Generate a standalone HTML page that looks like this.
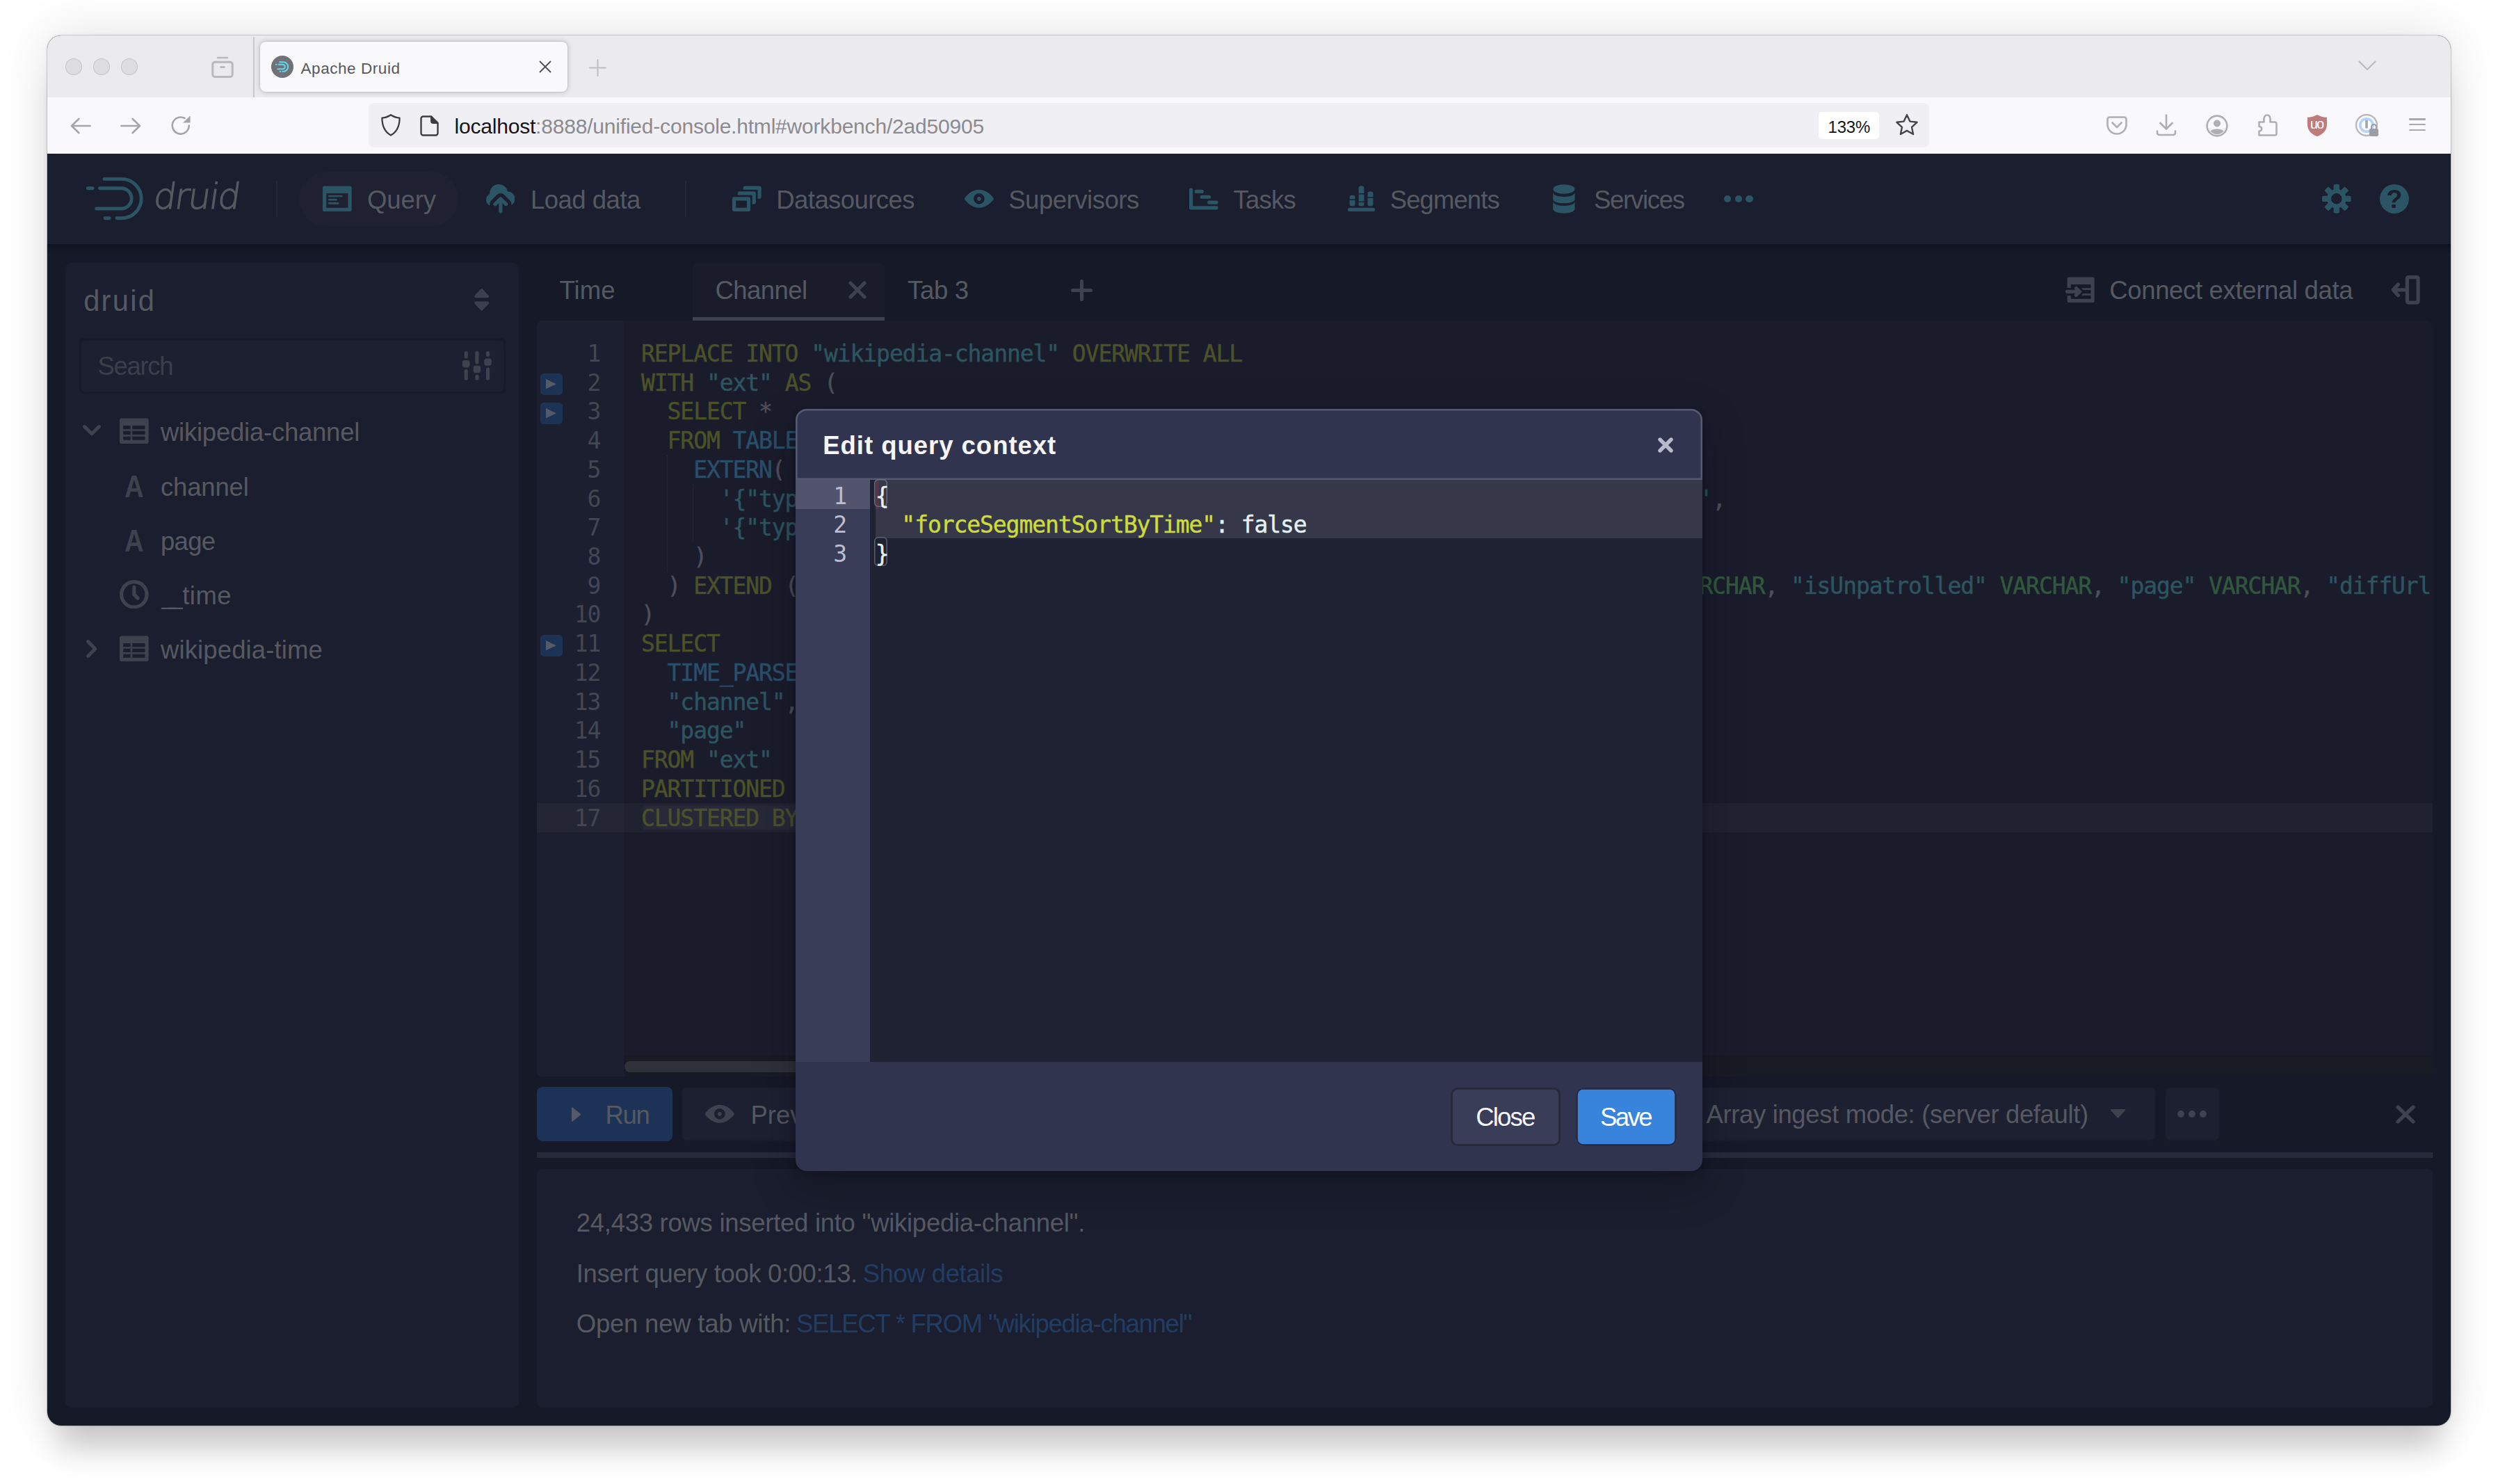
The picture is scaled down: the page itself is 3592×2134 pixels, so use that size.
<!DOCTYPE html>
<html lang="en"><head><meta charset="utf-8"><title>Apache Druid</title>
<style>
html,body{margin:0;padding:0;}
body{width:3592px;height:2134px;overflow:hidden;background:#fff;position:relative;font-family:"Liberation Sans",sans-serif;}
.b{position:absolute;display:block;}
.t{position:absolute;white-space:pre;display:block;}
#win{position:absolute;left:68px;top:51px;width:3456px;height:1999px;border-radius:20px;overflow:hidden;background:#151928;}
#shadow{position:absolute;left:68px;top:51px;width:3456px;height:1999px;border-radius:20px;box-shadow:0 0 0 1px rgba(0,0,0,.16),0 50px 44px -15px rgba(0,0,0,.17),0 0 70px rgba(0,0,0,.12),0 0 6px rgba(0,0,0,.06);}
#pg{position:absolute;left:-68px;top:-51px;width:3592px;height:2134px;}
</style></head><body>
<div id="shadow"></div>
<div id="win"><div id="pg">
<div class="b" style="left:68.0px;top:51.0px;width:3456.0px;height:89.0px;background:#ebebed;"></div>
<div class="b" style="left:68.0px;top:140.0px;width:3456.0px;height:81.0px;background:#f9f9fb;"></div>
<div class="b" style="left:94.0px;top:84.0px;width:24.0px;height:24.0px;background:#dddde0;border-radius:12px;box-shadow:inset 0 0 0 1px #c6c6c9;"></div>
<div class="b" style="left:134.0px;top:84.0px;width:24.0px;height:24.0px;background:#dddde0;border-radius:12px;box-shadow:inset 0 0 0 1px #c6c6c9;"></div>
<div class="b" style="left:174.0px;top:84.0px;width:24.0px;height:24.0px;background:#dddde0;border-radius:12px;box-shadow:inset 0 0 0 1px #c6c6c9;"></div>
<svg class="b" style="left:304.0px;top:80.0px;" width="32.0" height="32.0" viewBox="0 0 16 16"><path d="M4.5 1.5h7" stroke="#b9b9be" stroke-width="1.3" fill="none" stroke-linecap="round"/><rect x="0.9" y="4.6" width="14.2" height="10.6" rx="1.6" fill="none" stroke="#b9b9be" stroke-width="1.5"/><path d="M6.2 8.3h3.6" stroke="#b9b9be" stroke-width="1.5" fill="none"/></svg>
<div class="b" style="left:364.0px;top:53.0px;width:2.0px;height:87.0px;background:#c9c9cc;"></div>
<div class="b" style="left:374.0px;top:60.0px;width:442.0px;height:72.0px;background:#f9f9fb;border-radius:8px;box-shadow:0 0 8px rgba(0,0,0,.22),0 0 2px rgba(0,0,0,.2);"></div>
<svg class="b" style="left:390.0px;top:80.0px;" width="32.0" height="32.0" viewBox="0 0 32 32"><circle cx="16" cy="16" r="16" fill="#727078"/><g fill="none" stroke="#5fd9ee" stroke-width="2" stroke-linecap="round"><path d="M12.2 9.3H17.5A6.7 6.7 0 0 1 17.5 22.7H16.3"/><path d="M10.5 12.8H16.6A3.2 3.2 0 0 1 16.6 19.2H9.2"/><path d="M6.8 12.8H7.6"/><path d="M12.6 22.7H13.4"/></g></svg>
<span class="t" style="left:432.5px;top:88.2px;font:400 22.5px/22.5px 'Liberation Sans',sans-serif;color:#57565c;letter-spacing:0.56px;">Apache Druid</span>
<svg class="b" style="left:775.0px;top:87.0px;" width="18.0" height="18.0" viewBox="0 0 18 18"><path d="M1.5 1.5L16.5 16.5M16.5 1.5L1.5 16.5" stroke="#4e4d54" stroke-width="1.8" fill="none" stroke-linecap="round"/></svg>
<svg class="b" style="left:847.0px;top:85.0px;" width="25.0" height="25.0" viewBox="0 0 25 25"><path d="M12.5 1V24M1 12.5H24" stroke="#bdbdc2" stroke-width="2" fill="none" stroke-linecap="round"/></svg>
<svg class="b" style="left:3391.0px;top:87.0px;" width="26.0" height="16.0" viewBox="0 0 26 16"><path d="M1.5 1.5L13 13L24.5 1.5" stroke="#b9b9be" stroke-width="2" fill="none" stroke-linecap="round" stroke-linejoin="round"/></svg>
<svg class="b" style="left:101.0px;top:168.0px;" width="30.0" height="26.0" viewBox="0 0 30 26"><path d="M12.3 3L2 13L12.3 23M2.4 13H28.6" stroke="#a5a5ab" stroke-width="2.6" fill="none" stroke-linecap="round" stroke-linejoin="round"/></svg>
<svg class="b" style="left:173.0px;top:168.0px;" width="30.0" height="26.0" viewBox="0 0 30 26"><path d="M17.7 3L28 13L17.7 23M27.6 13H1.4" stroke="#a5a5ab" stroke-width="2.6" fill="none" stroke-linecap="round" stroke-linejoin="round"/></svg>
<svg class="b" style="left:245.0px;top:165.0px;" width="30.0" height="30.0" viewBox="0 0 30 30"><path d="M26.8 15.5A12 12 0 1 1 20.5 5" stroke="#a5a5ab" stroke-width="2.6" fill="none" stroke-linecap="round"/><path d="M28.6 1.2V11.4H18.2Z" fill="#a5a5ab"/></svg>
<div class="b" style="left:530.0px;top:148.0px;width:2244.0px;height:64.0px;background:#f0f0f4;border-radius:8px;"></div>
<svg class="b" style="left:546.0px;top:163.0px;" width="32.0" height="34.0" viewBox="0 0 32 34"><path d="M16 2.2C19.5 4.6 24 6.2 28.6 6.6C28.6 18 24.5 27 16 31.5C7.5 27 3.4 18 3.4 6.6C8 6.2 12.5 4.6 16 2.2Z" stroke="#3d3c42" stroke-width="2.3" fill="none" stroke-linejoin="round"/></svg>
<svg class="b" style="left:604.0px;top:166.0px;" width="27.0" height="30.0" viewBox="0 0 27 30"><path d="M4.5 1.5H16L25.5 11V25.5A3 3 0 0 1 22.5 28.5H4.5A3 3 0 0 1 1.5 25.5V4.5A3 3 0 0 1 4.5 1.5Z" stroke="#3d3c42" stroke-width="2.4" fill="none" stroke-linejoin="round"/><path d="M16 1.5V8A3 3 0 0 0 19 11H25.5Z" stroke="#3d3c42" stroke-width="2" fill="#3d3c42" stroke-linejoin="round"/></svg>
<span class="t" style="left:653.5px;top:166.6px;font:400 30px/30px 'Liberation Sans',sans-serif;letter-spacing:-0.20px;color:#8b8a91;"><span style="color:#15141a">localhost</span>:8888/unified-console.html#workbench/2ad50905</span>
<div class="b" style="left:2615.0px;top:161.0px;width:87.0px;height:39.0px;background:#ffffff;border-radius:5px;"></div>
<span class="t" style="left:2628.5px;top:170.9px;font:400 24px/24px 'Liberation Sans',sans-serif;color:#15141a;letter-spacing:-0.22px;">133%</span>
<svg class="b" style="left:2725.0px;top:163.0px;" width="34.0" height="33.0" viewBox="0 0 34 33"><path d="M17 2.2L21.4 11.6L31.6 12.8L24 19.8L26.1 30L17 24.9L7.9 30L10 19.8L2.4 12.8L12.6 11.6Z" stroke="#46454b" stroke-width="2.4" fill="none" stroke-linejoin="round"/></svg>
<svg class="b" style="left:3029.0px;top:166.0px;" width="30.0" height="30.0" viewBox="0 0 30 30"><path d="M4.5 2.5H25.5A3 3 0 0 1 28.5 5.5V13A13.5 13.5 0 0 1 1.5 13V5.5A3 3 0 0 1 4.5 2.5Z" stroke="#aeaeb4" stroke-width="2.6" fill="none"/><path d="M8.5 10.5L15 17L21.5 10.5" stroke="#aeaeb4" stroke-width="2.6" fill="none" stroke-linecap="round" stroke-linejoin="round"/></svg>
<svg class="b" style="left:3100.0px;top:164.0px;" width="30.0" height="32.0" viewBox="0 0 30 32"><path d="M15 1.5V21M6.5 13L15 21.5L23.5 13M2 24.5V27A3 3 0 0 0 5 30H25A3 3 0 0 0 28 27V24.5" stroke="#aeaeb4" stroke-width="2.6" fill="none" stroke-linecap="round" stroke-linejoin="round"/></svg>
<svg class="b" style="left:3172.0px;top:165.0px;" width="32.0" height="32.0" viewBox="0 0 32 32"><circle cx="16" cy="16" r="14.4" stroke="#aeaeb4" stroke-width="2.6" fill="none"/><circle cx="16" cy="12.5" r="5" fill="#aeaeb4"/><path d="M6.5 23.5C9 19.5 23 19.5 25.5 23.5C23 26.8 19.8 28.2 16 28.2C12.2 28.2 9 26.8 6.5 23.5Z" fill="#aeaeb4"/></svg>
<svg class="b" style="left:3246.0px;top:163.0px;" width="30.0" height="34.0" viewBox="0 0 30 34"><path d="M2.5 12.5H9.5V8.5C9.5 5 11 2.5 14 2.5C17 2.5 18.5 5 18.5 8.5V12.5H25A2.5 2.5 0 0 1 27.5 15V29A2.5 2.5 0 0 1 25 31.5H2.5V25.5C7.5 25.5 7.5 19 2.5 19Z" stroke="#aeaeb4" stroke-width="2.6" fill="none" stroke-linejoin="round"/></svg>
<svg class="b" style="left:3317.0px;top:164.0px;" width="30.0" height="33.0" viewBox="0 0 30 33"><path d="M15 1C19 3.4 23.5 4.6 29 4.8V15C29 23.5 23 29.5 15 32.2C7 29.5 1 23.5 1 15V4.8C6.5 4.6 11 3.4 15 1Z" fill="#bf7b7a"/></svg>
<span class="t" style="left:3322.0px;top:169.0px;font:400 19.5px/19.5px 'Liberation Sans',sans-serif;color:#ffffff;letter-spacing:-1.60px;">uo</span>
<svg class="b" style="left:3386.0px;top:163.0px;" width="36.0" height="36.0" viewBox="0 0 36 36"><circle cx="17" cy="17" r="15" stroke="#b9b9bf" stroke-width="2.4" fill="none"/><circle cx="17" cy="17" r="9.2" fill="#fbfbfe" stroke="#b4d2fa" stroke-width="3.6"/><rect x="15.2" y="9.5" width="3.6" height="12" rx="1" fill="#a3a3a9"/><rect x="21" y="22" width="13" height="11" rx="2" fill="#9d9da3"/><path d="M24 22V19.5A3.5 3.5 0 0 1 31 19.5V22" stroke="#9d9da3" stroke-width="2" fill="none"/></svg>
<div class="b" style="left:3464.3px;top:170.0px;width:23.5px;height:2.5px;background:#a9a9af;border-radius:1px;"></div>
<div class="b" style="left:3464.3px;top:177.8px;width:23.5px;height:2.5px;background:#a9a9af;border-radius:1px;"></div>
<div class="b" style="left:3464.3px;top:185.8px;width:23.5px;height:2.5px;background:#a9a9af;border-radius:1px;"></div>
<div class="b" style="left:68.0px;top:221.0px;width:3456.0px;height:130.0px;background:#1b1e2e;"></div>
<div class="b" style="left:68.0px;top:351.0px;width:3456.0px;height:14.0px;background:linear-gradient(rgba(12,14,26,.55),rgba(12,14,26,0));"></div>
<svg class="b" style="left:118.0px;top:250.0px;" width="92.0" height="70.0" viewBox="0 0 92 70"><g fill="none" stroke="#2b5565" stroke-width="4.9" stroke-linecap="round"><path d="M32 7.4H57A28.2 28.2 0 0 1 57 63.8H50"/><path d="M25.5 20.8H56.5A14.6 14.6 0 0 1 56.5 50H20.5"/><path d="M8.2 20.8H15.2"/><path d="M33.2 63.8H39.2"/></g></svg>
<span class="t" style="left:219px;top:256.5px;font:200 51px/51px 'DejaVu Sans',sans-serif;color:#565962;letter-spacing:-1.9px;-webkit-text-stroke:1.2px #565962;transform:skewX(-8deg);transform-origin:0 43px;">druid</span>
<div class="b" style="left:396.5px;top:260.0px;width:2.6px;height:52.0px;background:#25283a;"></div>
<div class="b" style="left:430.0px;top:247.0px;width:229.0px;height:78.0px;background:#1f2132;border-radius:39px;"></div>
<svg class="b" style="left:464.0px;top:265.0px;" width="41.7" height="41.7" viewBox="0 0 16 16"><g fill="#2b5565"><path fill-rule="evenodd" d="M1 1h14a1 1 0 0 1 1 1v12a1 1 0 0 1-1 1H1a1 1 0 0 1-1-1V2a1 1 0 0 1 1-1zm1 4v8h12V5H2z"/><rect x="3" y="6" width="8" height="1" rx=".5"/><rect x="3" y="8" width="5" height="1" rx=".5"/><rect x="3" y="10" width="6" height="1" rx=".5"/></g></svg>
<span class="t" style="left:527.9px;top:270.3px;font:400 36.5px/36.5px 'Liberation Sans',sans-serif;color:#565962;letter-spacing:-0.08px;">Query</span>
<svg class="b" style="left:698.8px;top:265.0px;" width="41.7" height="41.7" viewBox="0 0 16 16"><g fill="#2b5565"><path d="M8.71 7.29C8.53 7.11 8.28 7 8 7s-.53.11-.71.29l-3 3a1.003 1.003 0 001.42 1.42L7 10.41V15c0 .55.45 1 1 1s1-.45 1-1v-4.59l1.29 1.29c.18.19.43.3.71.3a1.003 1.003 0 00.71-1.71l-3-3zM12 4c-.03 0-.07 0-.1.01A5 5 0 002 5c0 .11.01.22.02.33a3.495 3.495 0 00.07 6.37c-.05-.23-.09-.46-.09-.7 0-.83.34-1.58.88-2.12l3-3a2.993 2.993 0 014.24 0l3 3c.54.54.88 1.29.88 2.12 0 .16-.02.32-.05.47C15.17 10.78 16 9.5 16 8c0-2.21-1.79-4-4-4z"/></g></svg>
<span class="t" style="left:762.9px;top:270.3px;font:400 36.5px/36.5px 'Liberation Sans',sans-serif;color:#565962;letter-spacing:-0.49px;">Load data</span>
<div class="b" style="left:984.5px;top:260.0px;width:2.6px;height:52.0px;background:#25283a;"></div>
<svg class="b" style="left:1053.0px;top:265.0px;" width="41.7" height="41.7" viewBox="0 0 16 16"><g fill="#2b5565"><path d="M12 3.98H4c-.55 0-1 .45-1 1v1h8v5h1c.55 0 1-.45 1-1v-5c0-.55-.45-1-1-1zm3-3H7c-.55 0-1 .45-1 1v1h8v5h1c.55 0 1-.45 1-1v-5c0-.55-.45-1-1-1zm-6 6H1c-.55 0-1 .45-1 1v6c0 .55.45 1 1 1h8c.55 0 1-.45 1-1v-6c0-.55-.45-1-1-1zm-1 6H2v-4h6v4z"/></g></svg>
<span class="t" style="left:1116.3px;top:270.3px;font:400 36.5px/36.5px 'Liberation Sans',sans-serif;color:#565962;letter-spacing:-0.57px;">Datasources</span>
<svg class="b" style="left:1387.0px;top:265.0px;" width="41.7" height="41.7" viewBox="0 0 16 16"><g fill="#2b5565"><path fill-rule="evenodd" d="M8 3C4.6 3 1.7 5.4.15 7.45a.9.9 0 0 0 0 1.1C1.7 10.6 4.6 13 8 13s6.3-2.4 7.85-4.45a.9.9 0 0 0 0-1.1C14.3 5.4 11.4 3 8 3zm0 2a3 3 0 1 1 0 6 3 3 0 0 1 0-6z"/><circle cx="8" cy="8" r="1.1"/></g></svg>
<span class="t" style="left:1450.2px;top:270.3px;font:400 36.5px/36.5px 'Liberation Sans',sans-serif;color:#565962;letter-spacing:-0.47px;">Supervisors</span>
<svg class="b" style="left:1710.0px;top:265.0px;" width="41.7" height="41.7" viewBox="0 0 16 16"><g fill="#2b5565"><path d="M1 2a1 1 0 0 1 1 1V12h13a1 1 0 0 1 0 2H1a1 1 0 0 1-1-1V3a1 1 0 0 1 1-1z"/><rect x="3" y="3" width="5" height="2" rx="1"/><rect x="6" y="6" width="6" height="2" rx="1"/><rect x="10" y="9" width="6" height="2" rx="1"/></g></svg>
<span class="t" style="left:1773.5px;top:270.3px;font:400 36.5px/36.5px 'Liberation Sans',sans-serif;color:#565962;letter-spacing:-0.76px;">Tasks</span>
<svg class="b" style="left:1938.0px;top:265.0px;" width="41.7" height="41.7" viewBox="0 0 16 16"><g fill="#2b5565"><rect x="0" y="13" width="15" height="2" rx="1"/><path d="M1 8.25V7a1 1 0 0 1 1-1h1a1 1 0 0 1 1 1V8.25z"/><path d="M1 8.8h3V11a1 1 0 0 1-1 1h-1a1 1 0 0 1-1-1z"/><path d="M6 5V2a1 1 0 0 1 1-1h1a1 1 0 0 1 1 1V5z"/><rect x="6" y="5.55" width="3" height="3.8999999999999995"/><path d="M6 10h3V11a1 1 0 0 1-1 1h-1a1 1 0 0 1-1-1z"/><path d="M11 7.05V5a1 1 0 0 1 1-1h1a1 1 0 0 1 1 1V7.05z"/><path d="M11 7.6h3V11a1 1 0 0 1-1 1h-1a1 1 0 0 1-1-1z"/></g></svg>
<span class="t" style="left:1998.8px;top:270.3px;font:400 36.5px/36.5px 'Liberation Sans',sans-serif;color:#565962;letter-spacing:-0.92px;">Segments</span>
<svg class="b" style="left:2228.0px;top:265.0px;" width="41.7" height="41.7" viewBox="0 0 16 16"><g fill="#2b5565"><path d="M2 4.6v3.7C2 9.5 4.7 10.5 8 10.5s6-1 6-2.2V4.6C14 5.9 11.3 6.9 8 6.9s-6-1-6-2.3zM2 9.6v4C2 14.9 4.7 16 8 16s6-1.1 6-2.4v-4c0 1.3-2.7 2.3-6 2.3s-6-1-6-2.3z"/><ellipse cx="8" cy="2.7" rx="6" ry="2.6"/></g></svg>
<span class="t" style="left:2291.9px;top:270.3px;font:400 36.5px/36.5px 'Liberation Sans',sans-serif;color:#565962;letter-spacing:-1.25px;">Services</span>
<div class="b" style="left:2478.8px;top:280.5px;width:10.4px;height:10.4px;background:#2b5565;border-radius:6px;"></div>
<div class="b" style="left:2494.5px;top:280.5px;width:10.4px;height:10.4px;background:#2b5565;border-radius:6px;"></div>
<div class="b" style="left:2510.3px;top:280.5px;width:10.4px;height:10.4px;background:#2b5565;border-radius:6px;"></div>
<svg class="b" style="left:3339.0px;top:265.0px;" width="41.7" height="41.7" viewBox="0 0 16 16"><g fill="#2b5565"><rect x="6.4" y="0" width="3.2" height="5" rx=".7" transform="rotate(0 8 8)"/><rect x="6.4" y="0" width="3.2" height="5" rx=".7" transform="rotate(45 8 8)"/><rect x="6.4" y="0" width="3.2" height="5" rx=".7" transform="rotate(90 8 8)"/><rect x="6.4" y="0" width="3.2" height="5" rx=".7" transform="rotate(135 8 8)"/><rect x="6.4" y="0" width="3.2" height="5" rx=".7" transform="rotate(180 8 8)"/><rect x="6.4" y="0" width="3.2" height="5" rx=".7" transform="rotate(225 8 8)"/><rect x="6.4" y="0" width="3.2" height="5" rx=".7" transform="rotate(270 8 8)"/><rect x="6.4" y="0" width="3.2" height="5" rx=".7" transform="rotate(315 8 8)"/><path fill-rule="evenodd" d="M8 2.7a5.3 5.3 0 1 0 0 10.6A5.3 5.3 0 0 0 8 2.7zm0 2.3a3 3 0 1 1 0 6 3 3 0 0 1 0-6z"/></g></svg>
<div class="b" style="left:3422.0px;top:264.8px;width:42.0px;height:42.0px;background:#2b5565;border-radius:21px;"></div>
<span class="t" style="left:3431.5px;top:268.3px;font:700 37.5px/37.5px 'Liberation Sans',sans-serif;color:#1b1e2e;">?</span>
<div class="b" style="left:94.0px;top:378.0px;width:652.0px;height:1646.0px;background:#1b1e2e;border-radius:8px;"></div>
<span class="t" style="left:120.2px;top:411.9px;font:400 41.7px/41.7px 'Liberation Sans',sans-serif;color:#565962;letter-spacing:2.25px;">druid</span>
<svg class="b" style="left:682.0px;top:414.9px;" width="21.2" height="31.8" viewBox="0 0 21.2 31.8"><path d="M9.2 .7Q10.6 -.5 12 .7L20.3 9.6Q21.6 11 20.8 12.2Q20.2 13.3 18.6 13.3H2.6Q1 13.3 .4 12.2Q-.4 11 .9 9.6Z M9.2 31.1Q10.6 32.3 12 31.1L20.3 22.2Q21.6 20.8 20.8 19.6Q20.2 18.5 18.6 18.5H2.6Q1 18.5 .4 19.6Q-.4 20.8 .9 22.2Z" fill="#3c3f4e"/></svg>
<div class="b" style="left:114.0px;top:485.5px;width:612.5px;height:80.5px;background:#1d2031;border-radius:8px;box-shadow:inset 0 0 0 2.6px #171a2a,inset 0 2px 4px rgba(10,12,22,.5);"></div>
<span class="t" style="left:140.5px;top:509.3px;font:400 36.5px/36.5px 'Liberation Sans',sans-serif;color:#3b3e4b;letter-spacing:-1.33px;">Search</span>
<svg class="b" style="left:665.0px;top:505.0px;" width="41.7" height="41.7" viewBox="0 0 16 16"><g fill="#3e414e"><rect x="1" y="0" width="2" height="4" rx="1"/><rect x="0" y="5" width="4" height="4" rx="1.2"/><rect x="1" y="10" width="2" height="6" rx="1"/><rect x="7" y="0" width="2" height="7" rx="1"/><rect x="6" y="8" width="4" height="4" rx="1.2"/><rect x="7" y="13" width="2" height="3" rx="1"/><rect x="13" y="0" width="2" height="3" rx="1"/><rect x="12" y="4" width="4" height="4" rx="1.2"/><rect x="13" y="9" width="2" height="7" rx="1"/></g></svg>
<svg class="b" style="left:119.3px;top:611.0px;" width="26.0" height="16.0" viewBox="0 0 26 16"><path d="M2.6 2.6L13 12.8L23.4 2.6" stroke="#3e414e" stroke-width="5" fill="none" stroke-linecap="round" stroke-linejoin="round"/></svg>
<svg class="b" style="left:172.0px;top:598.7px;" width="41.7" height="41.7" viewBox="0 0 16 16"><g fill="#3e414e"><path fill-rule="evenodd" d="M15 1H1c-.55 0-1 .45-1 1v12c0 .55.45 1 1 1h14c.55 0 1-.45 1-1V2c0-.55-.45-1-1-1zM6 13H2v-2h4v2zm0-3H2V8h4v2zm0-3H2V5h4v2zm8 6H7v-2h7v2zm0-3H7V8h7v2zm0-3H7V5h7v2z"/></g></svg>
<span class="t" style="left:231.0px;top:604.3px;font:400 36.5px/36.5px 'Liberation Sans',sans-serif;color:#565962;letter-spacing:-0.24px;">wikipedia-channel</span>
<span class="t" style="left:178.5px;top:677.8px;font:700 44px/44px 'Liberation Sans',sans-serif;color:#3e414e;transform:scaleX(.87);transform-origin:0 0;">A</span>
<span class="t" style="left:231.0px;top:682.6px;font:400 36.5px/36.5px 'Liberation Sans',sans-serif;color:#565962;letter-spacing:-0.17px;">channel</span>
<span class="t" style="left:178.5px;top:756.1px;font:700 44px/44px 'Liberation Sans',sans-serif;color:#3e414e;transform:scaleX(.87);transform-origin:0 0;">A</span>
<span class="t" style="left:231.0px;top:760.8px;font:400 36.5px/36.5px 'Liberation Sans',sans-serif;color:#565962;letter-spacing:-0.68px;">page</span>
<svg class="b" style="left:172.0px;top:833.5px;" width="41.7" height="41.7" viewBox="0 0 16 16"><g fill="#3e414e"><path fill-rule="evenodd" d="M8 0a8 8 0 1 0 0 16A8 8 0 0 0 8 0zm0 14A6 6 0 1 1 8 2a6 6 0 0 1 0 12z"/><path d="M9 7.59V4c0-.55-.45-1-1-1s-1 .45-1 1v4c0 .28.11.53.29.71l2 2a1.003 1.003 0 0 0 1.42-1.42L9 7.59z"/></g></svg>
<span class="t" style="left:232.5px;top:839.1px;font:400 36.5px/36.5px 'Liberation Sans',sans-serif;color:#565962;letter-spacing:-10.60px;">__</span>
<span class="t" style="left:262.2px;top:839.1px;font:400 36.5px/36.5px 'Liberation Sans',sans-serif;color:#565962;letter-spacing:0.51px;">time</span>
<svg class="b" style="left:124.0px;top:919.5px;" width="16.0" height="26.0" viewBox="0 0 16 26"><path d="M2.6 2.6L12.8 13L2.6 23.4" stroke="#3e414e" stroke-width="5" fill="none" stroke-linecap="round" stroke-linejoin="round"/></svg>
<svg class="b" style="left:172.0px;top:911.7px;" width="41.7" height="41.7" viewBox="0 0 16 16"><g fill="#3e414e"><path fill-rule="evenodd" d="M15 1H1c-.55 0-1 .45-1 1v12c0 .55.45 1 1 1h14c.55 0 1-.45 1-1V2c0-.55-.45-1-1-1zM6 13H2v-2h4v2zm0-3H2V8h4v2zm0-3H2V5h4v2zm8 6H7v-2h7v2zm0-3H7V8h7v2zm0-3H7V5h7v2z"/></g></svg>
<span class="t" style="left:231.0px;top:917.3px;font:400 36.5px/36.5px 'Liberation Sans',sans-serif;color:#565962;letter-spacing:0.12px;">wikipedia-time</span>
<span class="t" style="left:804.5px;top:400.3px;font:400 36.5px/36.5px 'Liberation Sans',sans-serif;color:#565962;letter-spacing:0.06px;">Time</span>
<div class="b" style="left:996.0px;top:378.0px;width:276.0px;height:83.0px;background:#1a1c2c;border-radius:8px;border-bottom-left-radius:0;border-bottom-right-radius:0;"></div>
<div class="b" style="left:996.0px;top:455.9px;width:276.0px;height:5.1px;background:#3e4150;"></div>
<span class="t" style="left:1028.5px;top:400.3px;font:400 36.5px/36.5px 'Liberation Sans',sans-serif;color:#565962;letter-spacing:-0.57px;">Channel</span>
<svg class="b" style="left:1220.0px;top:404.0px;" width="26.0" height="26.0" viewBox="0 0 26 26"><path d="M3 3L23 23M23 3L3 23" stroke="#3e414e" stroke-width="5.2" fill="none" stroke-linecap="round"/></svg>
<span class="t" style="left:1304.9px;top:400.3px;font:400 36.5px/36.5px 'Liberation Sans',sans-serif;color:#565962;letter-spacing:-0.26px;">Tab 3</span>
<svg class="b" style="left:1540.0px;top:402.0px;" width="31.0" height="31.0" viewBox="0 0 31 31"><path d="M15.5 2.6V28.4M2.6 15.5H28.4" stroke="#3e414e" stroke-width="5.2" fill="none" stroke-linecap="round"/></svg>
<svg class="b" style="left:2969.9px;top:395.7px;" width="41.7" height="41.7" viewBox="0 0 16 16"><g fill="#3e414e"><path d="M2 1h13a1 1 0 0 1 1 1v12a1 1 0 0 1-1 1H2a1 1 0 0 1-1-1v-3h2v2h11V5H3v2H1V2a1 1 0 0 1 1-1z"/><rect x="7" y="7" width="7.5" height="1.1"/><rect x="7" y="10" width="7.5" height="1.1"/></g><path d="M-1 9H7.5M5.9 7.1L7.8 9L5.9 10.9" stroke="#171927" stroke-width="4.2" fill="none" stroke-linecap="round" stroke-linejoin="miter"/><path d="M1 9H7.5M5.9 7.1L7.8 9L5.9 10.9" stroke="#3e414e" stroke-width="2" fill="none" stroke-linecap="round" stroke-linejoin="miter"/></svg>
<span class="t" style="left:3033.2px;top:400.0px;font:400 36.5px/36.5px 'Liberation Sans',sans-serif;color:#565962;letter-spacing:-0.34px;">Connect external data</span>
<svg class="b" style="left:3438.1px;top:395.9px;" width="41.7" height="41.7" viewBox="0 0 16 16"><rect x="9" y="1" width="6" height="14" rx=".6" fill="none" stroke="#3e414e" stroke-width="2"/><path d="M1.35 8H8.2M4 5L1.3 8L4 11" stroke="#3e414e" stroke-width="2" fill="none" stroke-linecap="round" stroke-linejoin="round"/></svg>
<div class="b" style="left:772.0px;top:461.0px;width:2726.0px;height:1086.7px;background:#1a1c2c;border-radius:8px;"></div>
<div class="b" style="left:772.0px;top:461.0px;width:125.0px;height:1086.7px;background:#1c1f2f;border-radius:8px 0 0 8px;"></div>
<div class="b" style="left:772.0px;top:1155.3px;width:125.0px;height:41.7px;background:#242636;"></div>
<div class="b" style="left:897.0px;top:1155.3px;width:2601.0px;height:41.7px;background:#202232;"></div>
<div class="b" style="left:923.5px;top:1157.3px;width:415.2px;height:37.2px;background:#272939;border-radius:3px;box-shadow:inset 0 0 0 1.3px #1f2733;"></div>
<span class="t" style="left:922.0px;top:487.80px;font:400 33.0px/41.74px 'DejaVu Sans Mono','Liberation Mono',monospace;letter-spacing:-1.085px;height:41.74px;-webkit-text-stroke-width:.45px;width:2576.0px;overflow:hidden;"><span style="color:#4c5228">REPLACE INTO </span><span style="color:#2c5560">"wikipedia-channel"</span><span style="color:#4c5228"> OVERWRITE ALL</span></span>
<span class="t" style="left:844.5px;top:487.80px;font:400 33.0px/41.74px 'DejaVu Sans Mono','Liberation Mono',monospace;letter-spacing:-1.085px;color:#434653;">1</span>
<span class="t" style="left:922.0px;top:529.54px;font:400 33.0px/41.74px 'DejaVu Sans Mono','Liberation Mono',monospace;letter-spacing:-1.085px;height:41.74px;-webkit-text-stroke-width:.45px;width:2576.0px;overflow:hidden;"><span style="color:#4c5228">WITH </span><span style="color:#2c5560">"ext"</span><span style="color:#4c5228"> AS </span><span style="color:#4d505c">(</span></span>
<span class="t" style="left:844.5px;top:529.54px;font:400 33.0px/41.74px 'DejaVu Sans Mono','Liberation Mono',monospace;letter-spacing:-1.085px;color:#434653;">2</span>
<span class="t" style="left:922.0px;top:571.28px;font:400 33.0px/41.74px 'DejaVu Sans Mono','Liberation Mono',monospace;letter-spacing:-1.085px;height:41.74px;-webkit-text-stroke-width:.45px;width:2576.0px;overflow:hidden;"><span style="color:#4c5228">  SELECT </span><span style="color:#4d505c">*</span></span>
<span class="t" style="left:844.5px;top:571.28px;font:400 33.0px/41.74px 'DejaVu Sans Mono','Liberation Mono',monospace;letter-spacing:-1.085px;color:#434653;">3</span>
<span class="t" style="left:922.0px;top:613.02px;font:400 33.0px/41.74px 'DejaVu Sans Mono','Liberation Mono',monospace;letter-spacing:-1.085px;height:41.74px;-webkit-text-stroke-width:.45px;width:2576.0px;overflow:hidden;"><span style="color:#4c5228">  FROM </span><span style="color:#2a4f6a">TABLE</span><span style="color:#4d505c">(</span></span>
<span class="t" style="left:844.5px;top:613.02px;font:400 33.0px/41.74px 'DejaVu Sans Mono','Liberation Mono',monospace;letter-spacing:-1.085px;color:#434653;">4</span>
<span class="t" style="left:922.0px;top:654.76px;font:400 33.0px/41.74px 'DejaVu Sans Mono','Liberation Mono',monospace;letter-spacing:-1.085px;height:41.74px;-webkit-text-stroke-width:.45px;width:2576.0px;overflow:hidden;"><span style="color:#2a4f6a">    EXTERN</span><span style="color:#4d505c">(</span></span>
<span class="t" style="left:844.5px;top:654.76px;font:400 33.0px/41.74px 'DejaVu Sans Mono','Liberation Mono',monospace;letter-spacing:-1.085px;color:#434653;">5</span>
<span class="t" style="left:922.0px;top:696.50px;font:400 33.0px/41.74px 'DejaVu Sans Mono','Liberation Mono',monospace;letter-spacing:-1.085px;height:41.74px;-webkit-text-stroke-width:.45px;width:2576.0px;overflow:hidden;"><span style="color:#2c5560">      '{"type":"http","uris":["druid.apache.org/data/wikiticker/wikipedia.json"]}'</span><span style="color:#4d505c">,</span></span>
<span class="t" style="left:844.5px;top:696.50px;font:400 33.0px/41.74px 'DejaVu Sans Mono','Liberation Mono',monospace;letter-spacing:-1.085px;color:#434653;">6</span>
<span class="t" style="left:922.0px;top:738.24px;font:400 33.0px/41.74px 'DejaVu Sans Mono','Liberation Mono',monospace;letter-spacing:-1.085px;height:41.74px;-webkit-text-stroke-width:.45px;width:2576.0px;overflow:hidden;"><span style="color:#2c5560">      '{"type":"json"}'</span></span>
<span class="t" style="left:844.5px;top:738.24px;font:400 33.0px/41.74px 'DejaVu Sans Mono','Liberation Mono',monospace;letter-spacing:-1.085px;color:#434653;">7</span>
<span class="t" style="left:922.0px;top:779.98px;font:400 33.0px/41.74px 'DejaVu Sans Mono','Liberation Mono',monospace;letter-spacing:-1.085px;height:41.74px;-webkit-text-stroke-width:.45px;width:2576.0px;overflow:hidden;"><span style="color:#4d505c">    )</span></span>
<span class="t" style="left:844.5px;top:779.98px;font:400 33.0px/41.74px 'DejaVu Sans Mono','Liberation Mono',monospace;letter-spacing:-1.085px;color:#434653;">8</span>
<span class="t" style="left:922.0px;top:821.72px;font:400 33.0px/41.74px 'DejaVu Sans Mono','Liberation Mono',monospace;letter-spacing:-1.085px;height:41.74px;-webkit-text-stroke-width:.45px;width:2576.0px;overflow:hidden;"><span style="color:#4d505c">  ) </span><span style="color:#4c5228">EXTEND </span><span style="color:#4d505c">(</span><span style="color:#2c5560">"isRobot"</span><span style="color:#30593c"> VARCHAR</span><span style="color:#4d505c">, </span><span style="color:#2c5560">"channel"</span><span style="color:#30593c"> VARCHAR</span><span style="color:#4d505c">, </span><span style="color:#2c5560">"timestamp"</span><span style="color:#30593c"> VARCHAR</span><span style="color:#4d505c">, </span><span style="color:#2c5560">"flags"</span><span style="color:#30593c"> VARCHAR</span><span style="color:#4d505c">, </span><span style="color:#2c5560">"isUnpatrolled"</span><span style="color:#30593c"> VARCHAR</span><span style="color:#4d505c">, </span><span style="color:#2c5560">"page"</span><span style="color:#30593c"> VARCHAR</span><span style="color:#4d505c">, </span><span style="color:#2c5560">"diffUrl"</span><span style="color:#30593c"> VARCHAR</span><span style="color:#4d505c">, </span><span style="color:#2c5560">"added"</span><span style="color:#30593c"> BIGINT</span><span style="color:#4d505c">, </span><span style="color:#2c5560">"comment"</span><span style="color:#30593c"> VARCHAR</span><span style="color:#4d505c">, </span></span>
<span class="t" style="left:844.5px;top:821.72px;font:400 33.0px/41.74px 'DejaVu Sans Mono','Liberation Mono',monospace;letter-spacing:-1.085px;color:#434653;">9</span>
<span class="t" style="left:922.0px;top:863.46px;font:400 33.0px/41.74px 'DejaVu Sans Mono','Liberation Mono',monospace;letter-spacing:-1.085px;height:41.74px;-webkit-text-stroke-width:.45px;width:2576.0px;overflow:hidden;"><span style="color:#4d505c">)</span></span>
<span class="t" style="left:825.7px;top:863.46px;font:400 33.0px/41.74px 'DejaVu Sans Mono','Liberation Mono',monospace;letter-spacing:-1.085px;color:#434653;">10</span>
<span class="t" style="left:922.0px;top:905.20px;font:400 33.0px/41.74px 'DejaVu Sans Mono','Liberation Mono',monospace;letter-spacing:-1.085px;height:41.74px;-webkit-text-stroke-width:.45px;width:2576.0px;overflow:hidden;"><span style="color:#4c5228">SELECT</span></span>
<span class="t" style="left:825.7px;top:905.20px;font:400 33.0px/41.74px 'DejaVu Sans Mono','Liberation Mono',monospace;letter-spacing:-1.085px;color:#434653;">11</span>
<span class="t" style="left:922.0px;top:946.94px;font:400 33.0px/41.74px 'DejaVu Sans Mono','Liberation Mono',monospace;letter-spacing:-1.085px;height:41.74px;-webkit-text-stroke-width:.45px;width:2576.0px;overflow:hidden;"><span style="color:#2a4f6a">  TIME_PARSE</span><span style="color:#4d505c">(</span><span style="color:#2c5560">"timestamp"</span><span style="color:#4d505c">) </span><span style="color:#4c5228">AS </span><span style="color:#2c5560">"__time"</span><span style="color:#4d505c">,</span></span>
<span class="t" style="left:825.7px;top:946.94px;font:400 33.0px/41.74px 'DejaVu Sans Mono','Liberation Mono',monospace;letter-spacing:-1.085px;color:#434653;">12</span>
<span class="t" style="left:922.0px;top:988.68px;font:400 33.0px/41.74px 'DejaVu Sans Mono','Liberation Mono',monospace;letter-spacing:-1.085px;height:41.74px;-webkit-text-stroke-width:.45px;width:2576.0px;overflow:hidden;"><span style="color:#2c5560">  "channel"</span><span style="color:#4d505c">,</span></span>
<span class="t" style="left:825.7px;top:988.68px;font:400 33.0px/41.74px 'DejaVu Sans Mono','Liberation Mono',monospace;letter-spacing:-1.085px;color:#434653;">13</span>
<span class="t" style="left:922.0px;top:1030.42px;font:400 33.0px/41.74px 'DejaVu Sans Mono','Liberation Mono',monospace;letter-spacing:-1.085px;height:41.74px;-webkit-text-stroke-width:.45px;width:2576.0px;overflow:hidden;"><span style="color:#2c5560">  "page"</span></span>
<span class="t" style="left:825.7px;top:1030.42px;font:400 33.0px/41.74px 'DejaVu Sans Mono','Liberation Mono',monospace;letter-spacing:-1.085px;color:#434653;">14</span>
<span class="t" style="left:922.0px;top:1072.16px;font:400 33.0px/41.74px 'DejaVu Sans Mono','Liberation Mono',monospace;letter-spacing:-1.085px;height:41.74px;-webkit-text-stroke-width:.45px;width:2576.0px;overflow:hidden;"><span style="color:#4c5228">FROM </span><span style="color:#2c5560">"ext"</span></span>
<span class="t" style="left:825.7px;top:1072.16px;font:400 33.0px/41.74px 'DejaVu Sans Mono','Liberation Mono',monospace;letter-spacing:-1.085px;color:#434653;">15</span>
<span class="t" style="left:922.0px;top:1113.90px;font:400 33.0px/41.74px 'DejaVu Sans Mono','Liberation Mono',monospace;letter-spacing:-1.085px;height:41.74px;-webkit-text-stroke-width:.45px;width:2576.0px;overflow:hidden;"><span style="color:#4c5228">PARTITIONED BY DAY</span></span>
<span class="t" style="left:825.7px;top:1113.90px;font:400 33.0px/41.74px 'DejaVu Sans Mono','Liberation Mono',monospace;letter-spacing:-1.085px;color:#434653;">16</span>
<span class="t" style="left:922.0px;top:1155.64px;font:400 33.0px/41.74px 'DejaVu Sans Mono','Liberation Mono',monospace;letter-spacing:-1.085px;height:41.74px;-webkit-text-stroke-width:.45px;width:2576.0px;overflow:hidden;"><span style="color:#4c5228">CLUSTERED BY </span><span style="color:#2c5560">"channel"</span></span>
<span class="t" style="left:825.7px;top:1155.64px;font:400 33.0px/41.74px 'DejaVu Sans Mono','Liberation Mono',monospace;letter-spacing:-1.085px;color:#434653;">17</span>
<div class="b" style="left:776.9px;top:536.9px;width:32.2px;height:31.0px;background:#1d3356;border-radius:5px;"></div>
<svg class="b" style="left:784.8px;top:544.8px;" width="14.8" height="14.4" viewBox="0 0 14.8 14.4"><path d="M0 0L14.8 7.2L0 14.4Z" fill="#565a66"/></svg>
<div class="b" style="left:776.9px;top:578.7px;width:32.2px;height:31.0px;background:#1d3356;border-radius:5px;"></div>
<svg class="b" style="left:784.8px;top:586.6px;" width="14.8" height="14.4" viewBox="0 0 14.8 14.4"><path d="M0 0L14.8 7.2L0 14.4Z" fill="#565a66"/></svg>
<div class="b" style="left:776.9px;top:912.6px;width:32.2px;height:31.0px;background:#1d3356;border-radius:5px;"></div>
<svg class="b" style="left:784.8px;top:920.5px;" width="14.8" height="14.4" viewBox="0 0 14.8 14.4"><path d="M0 0L14.8 7.2L0 14.4Z" fill="#565a66"/></svg>
<div class="b" style="left:958.6px;top:654.5px;width:1.5px;height:167.0px;background:transparent;border-left:1.5px dotted #2a2d3c;"></div>
<div class="b" style="left:996.1px;top:696.2px;width:1.5px;height:83.5px;background:transparent;border-left:1.5px dotted #2a2d3c;"></div>
<div class="b" style="left:897.0px;top:1518.0px;width:2601.0px;height:29.0px;background:#181a24;border-bottom-right-radius:8px;"></div>
<div class="b" style="left:898.0px;top:1525.6px;width:1420.0px;height:16.4px;background:#2e303a;border-radius:8.2px;"></div>
<div class="b" style="left:772.0px;top:1563.0px;width:195.0px;height:78.0px;background:#1c3357;border-radius:8px;"></div>
<svg class="b" style="left:820.5px;top:1590.5px;" width="15.0" height="23.0" viewBox="0 0 15 23"><path d="M1 2.2Q1 0.4 2.4 1.6L13.6 10.6Q14.6 11.5 13.6 12.4L2.4 21.4Q1 22.6 1 20.8Z" fill="#555a6b"/></svg>
<span class="t" style="left:870.5px;top:1585.8px;font:400 36.5px/36.5px 'Liberation Sans',sans-serif;color:#565962;letter-spacing:-1.32px;">Run</span>
<div class="b" style="left:979.5px;top:1563.0px;width:420.0px;height:78.0px;background:#1d2031;border-radius:8px;box-shadow:inset 0 0 0 1.3px #191b2a;"></div>
<svg class="b" style="left:1014.0px;top:1581.0px;" width="41.7" height="41.7" viewBox="0 0 16 16"><g fill="#3e414e"><path fill-rule="evenodd" d="M8 3C4.6 3 1.7 5.4.15 7.45a.9.9 0 0 0 0 1.1C1.7 10.6 4.6 13 8 13s6.3-2.4 7.85-4.45a.9.9 0 0 0 0-1.1C14.3 5.4 11.4 3 8 3zm0 2a3 3 0 1 1 0 6 3 3 0 0 1 0-6z"/><circle cx="8" cy="8" r="1.1"/></g></svg>
<span class="t" style="left:1079.5px;top:1585.8px;font:400 36.5px/36.5px 'Liberation Sans',sans-serif;color:#565962;">Preview</span>
<div class="b" style="left:2200.0px;top:1563.0px;width:900.0px;height:78.0px;background:#1d2031;border-radius:8px;box-shadow:inset 0 0 0 1.3px #191b2a;"></div>
<span class="t" style="left:2453.5px;top:1585.3px;font:400 36.5px/36.5px 'Liberation Sans',sans-serif;color:#565962;letter-spacing:-0.36px;">Array ingest mode: (server default)</span>
<svg class="b" style="left:3033.5px;top:1594.0px;" width="23.0" height="14.0" viewBox="0 0 23 14"><path d="M1.5 1H21.5Q23 1 22 2.4L12.6 13Q11.5 14 10.4 13L1 2.4Q0 1 1.5 1Z" fill="#3e414e"/></svg>
<div class="b" style="left:3112.5px;top:1563.0px;width:79.0px;height:78.0px;background:#1d2031;border-radius:8px;box-shadow:inset 0 0 0 1.3px #191b2a;"></div>
<div class="b" style="left:3130.8px;top:1596.8px;width:10.4px;height:10.4px;background:#3e414e;border-radius:6px;"></div>
<div class="b" style="left:3146.8px;top:1596.8px;width:10.4px;height:10.4px;background:#3e414e;border-radius:6px;"></div>
<div class="b" style="left:3162.8px;top:1596.8px;width:10.4px;height:10.4px;background:#3e414e;border-radius:6px;"></div>
<svg class="b" style="left:3445.0px;top:1589.0px;" width="28.0" height="27.0" viewBox="0 0 28 27"><path d="M3 3L25 24M25 3L3 24" stroke="#3e414e" stroke-width="5.2" fill="none" stroke-linecap="round"/></svg>
<div class="b" style="left:772.0px;top:1657.0px;width:2726.0px;height:8.0px;background:#282a3c;"></div>
<div class="b" style="left:772.0px;top:1681.0px;width:2726.0px;height:343.0px;background:#1b1e2e;border-radius:8px;"></div>
<span class="t" style="left:828.8px;top:1740.7px;font:400 36.5px/36.5px 'Liberation Sans',sans-serif;color:#565962;letter-spacing:-0.28px;">24,433 rows inserted into "wikipedia-channel".</span>
<span class="t" style="left:828.8px;top:1813.5px;font:400 36.5px/36.5px 'Liberation Sans',sans-serif;color:#565962;letter-spacing:-0.38px;">Insert query took 0:00:13.</span>
<span class="t" style="left:1240.7px;top:1813.5px;font:400 36.5px/36.5px 'Liberation Sans',sans-serif;color:#223d63;letter-spacing:-0.46px;">Show details</span>
<span class="t" style="left:828.8px;top:1886.3px;font:400 36.5px/36.5px 'Liberation Sans',sans-serif;color:#565962;letter-spacing:-0.23px;">Open new tab with:</span>
<span class="t" style="left:1145.0px;top:1886.3px;font:400 36.5px/36.5px 'Liberation Sans',sans-serif;color:#223d63;letter-spacing:-1.25px;">SELECT * FROM "wikipedia-channel"</span>
<div class="b" style="left:1143.9px;top:587.5px;width:1304.3px;height:1096.3px;background:#30344e;border-radius:16px;box-shadow:0 5px 10px rgba(8,9,18,.32),0 20px 62px rgba(8,9,18,.32);overflow:hidden;"></div>
<div class="b" style="left:1143.9px;top:587.5px;width:1304.3px;height:102.5px;background:#30344e;border-radius:16px 16px 0 0;box-shadow:inset 0 0 0 2.6px #565972;"></div>
<span class="t" style="left:1183.2px;top:623.3px;font:700 36.5px/36.5px 'Liberation Sans',sans-serif;color:#f5f6fa;letter-spacing:0.98px;">Edit query context</span>
<svg class="b" style="left:2384.0px;top:629.0px;" width="22.0" height="22.0" viewBox="0 0 22 22"><path d="M3 3L19 19M19 3L3 19" stroke="#b9bbcd" stroke-width="5.4" fill="none" stroke-linecap="round"/></svg>
<div class="b" style="left:1143.9px;top:690.0px;width:1304.3px;height:837.3px;background:#1f2233;"></div>
<div class="b" style="left:1143.9px;top:690.0px;width:107.1px;height:837.3px;background:#393d58;"></div>
<div class="b" style="left:1143.9px;top:690.0px;width:107.1px;height:41.7px;background:#52546e;"></div>
<div class="b" style="left:1259.0px;top:690.0px;width:1189.2px;height:83.5px;background:#363849;"></div>
<div class="b" style="left:1259.0px;top:690.0px;width:5.0px;height:41.7px;background:#5a3443;"></div>
<div class="b" style="left:1257.4px;top:689.0px;width:19.0px;height:39.5px;background:transparent;border-radius:6px;box-shadow:inset 0 0 0 1.5px #6a6d7c;"></div>
<div class="b" style="left:1257.4px;top:772.0px;width:19.0px;height:42.0px;background:transparent;border-radius:6px;box-shadow:inset 0 0 0 1.5px #5a5d6c;"></div>
<span class="t" style="left:1258.8px;top:692.60px;font:400 33.0px/41.74px 'DejaVu Sans Mono','Liberation Mono',monospace;letter-spacing:-1.085px;height:41.74px;-webkit-text-stroke-width:.45px;"><span style="color:#e4f1f1">{</span></span>
<span class="t" style="left:1198.2px;top:692.60px;font:400 33.0px/41.74px 'DejaVu Sans Mono','Liberation Mono',monospace;letter-spacing:-1.085px;color:#bdbdd2;">1</span>
<span class="t" style="left:1258.8px;top:734.34px;font:400 33.0px/41.74px 'DejaVu Sans Mono','Liberation Mono',monospace;letter-spacing:-1.085px;height:41.74px;-webkit-text-stroke-width:.45px;"><span style="color:#cddc39">  "forceSegmentSortByTime"</span><span style="color:#e4f1f1">: false</span></span>
<span class="t" style="left:1198.2px;top:734.34px;font:400 33.0px/41.74px 'DejaVu Sans Mono','Liberation Mono',monospace;letter-spacing:-1.085px;color:#bdbdd2;">2</span>
<span class="t" style="left:1258.8px;top:776.08px;font:400 33.0px/41.74px 'DejaVu Sans Mono','Liberation Mono',monospace;letter-spacing:-1.085px;height:41.74px;-webkit-text-stroke-width:.45px;"><span style="color:#e4f1f1">}</span></span>
<span class="t" style="left:1198.2px;top:776.08px;font:400 33.0px/41.74px 'DejaVu Sans Mono','Liberation Mono',monospace;letter-spacing:-1.085px;color:#bdbdd2;">3</span>
<div class="b" style="left:2086.1px;top:1564.3px;width:157.7px;height:83.3px;background:#3a3d58;border-radius:10px;box-shadow:inset 0 0 0 2.8px #26283b;"></div>
<span class="t" style="left:2122.2px;top:1589.3px;font:400 36.5px/36.5px 'Liberation Sans',sans-serif;color:#f5f6fa;letter-spacing:-1.80px;">Close</span>
<div class="b" style="left:2265.8px;top:1564.3px;width:145.7px;height:83.3px;background:#3883dc;border-radius:10px;box-shadow:inset 0 0 0 2.8px #272a40;"></div>
<span class="t" style="left:2301.1px;top:1589.3px;font:400 36.5px/36.5px 'Liberation Sans',sans-serif;color:#ffffff;letter-spacing:-2.60px;">Save</span>
</div></div>
</body></html>
